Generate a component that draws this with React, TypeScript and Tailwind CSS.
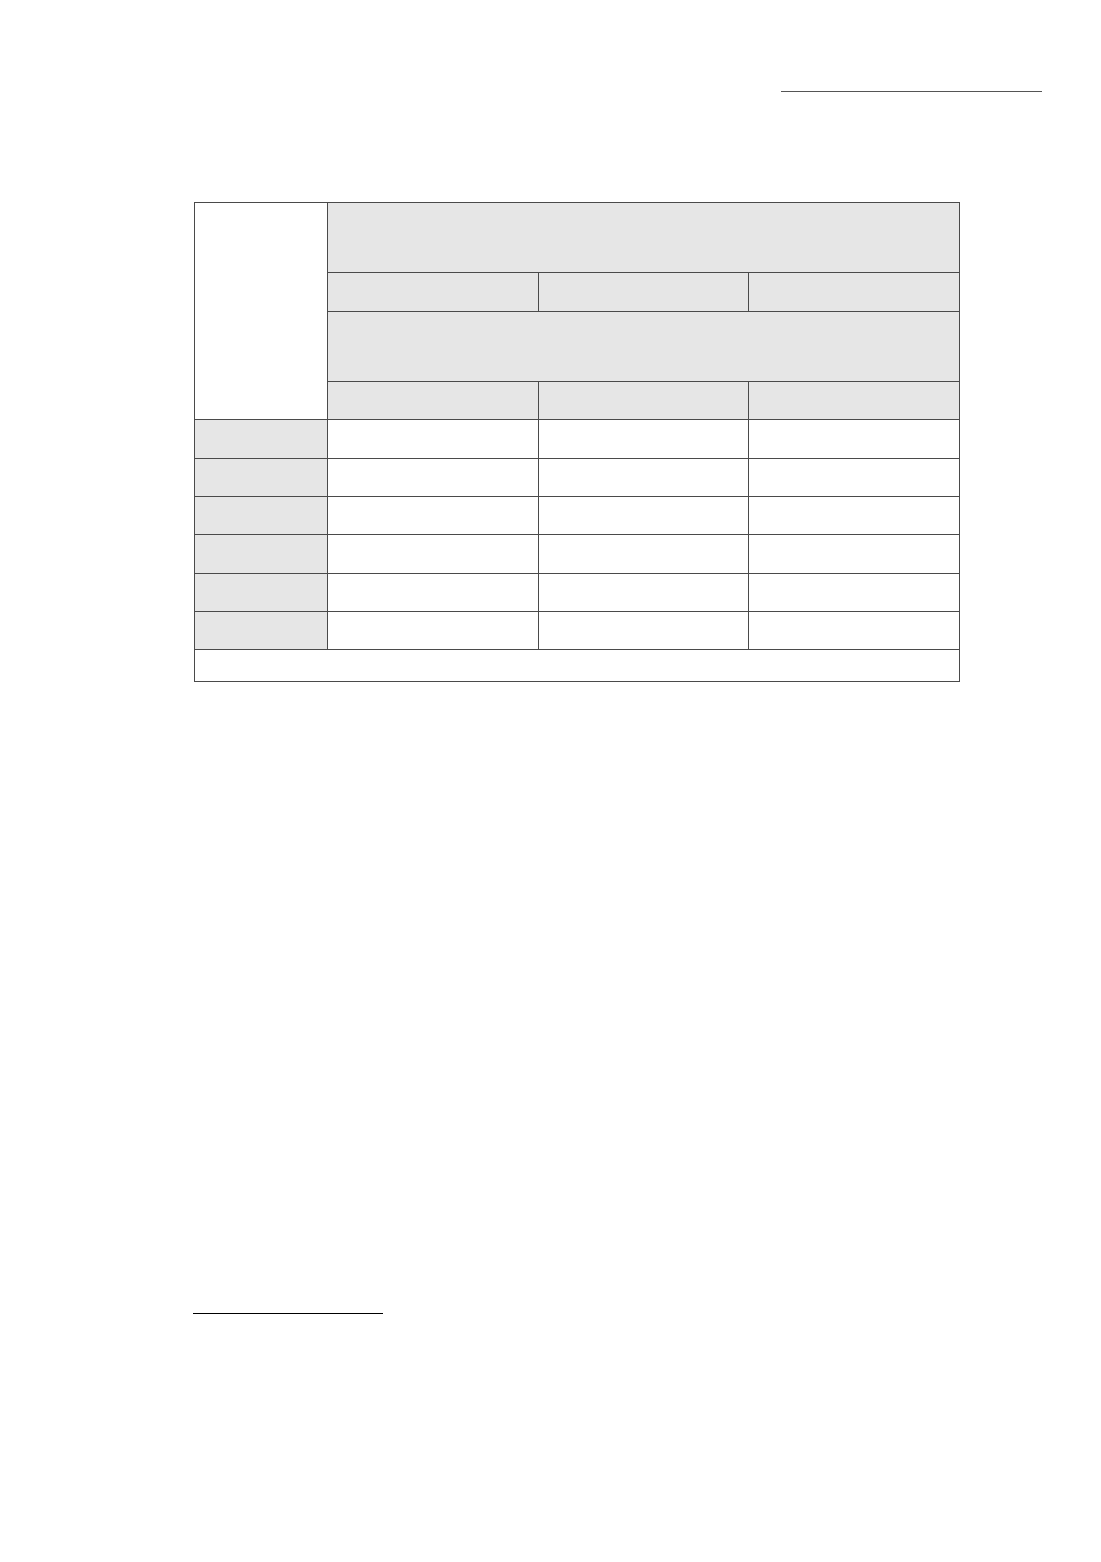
import React from 'react';

const GRAY = 'bg-[#e6e6e6]';
const CELL = 'border border-[#4a4a4a] p-0';

const bodyRows = [39, 38, 38, 39, 38, 38];

const App: React.FC = () => {
  return (
    <div className="w-[1101px] h-[1562px] bg-white relative font-['Liberation_Sans',sans-serif]">
      <div className="pt-[91px] pl-[781px]">
        <div className="w-[261px] border-t border-[#555]" />
      </div>

      <table className="ml-[194px] mt-[110px] w-[765px] border-collapse table-fixed">
        <colgroup>
          <col className="w-[133px]" />
          <col className="w-[211px]" />
          <col className="w-[210px]" />
          <col className="w-[211px]" />
        </colgroup>
        <tbody>
          <tr className="h-[70px]">
            <td rowSpan={4} className={`${CELL} bg-white`} />
            <td colSpan={3} className={`${CELL} ${GRAY}`} />
          </tr>
          <tr className="h-[39px]">
            <td className={`${CELL} ${GRAY}`} />
            <td className={`${CELL} ${GRAY}`} />
            <td className={`${CELL} ${GRAY}`} />
          </tr>
          <tr className="h-[70px]">
            <td colSpan={3} className={`${CELL} ${GRAY}`} />
          </tr>
          <tr className="h-[38px]">
            <td className={`${CELL} ${GRAY}`} />
            <td className={`${CELL} ${GRAY}`} />
            <td className={`${CELL} ${GRAY}`} />
          </tr>
          {bodyRows.map((h, i) => (
            <tr key={i} style={{ height: h }}>
              <td className={`${CELL} ${GRAY}`} />
              <td className={CELL} />
              <td className={CELL} />
              <td className={CELL} />
            </tr>
          ))}
          <tr className="h-[32px]">
            <td colSpan={4} className={CELL} />
          </tr>
        </tbody>
      </table>

      <div className="mt-[631px] pl-[193px]">
        <div className="w-[190px] border-t border-black" />
      </div>
    </div>
  );
};

export default App;
